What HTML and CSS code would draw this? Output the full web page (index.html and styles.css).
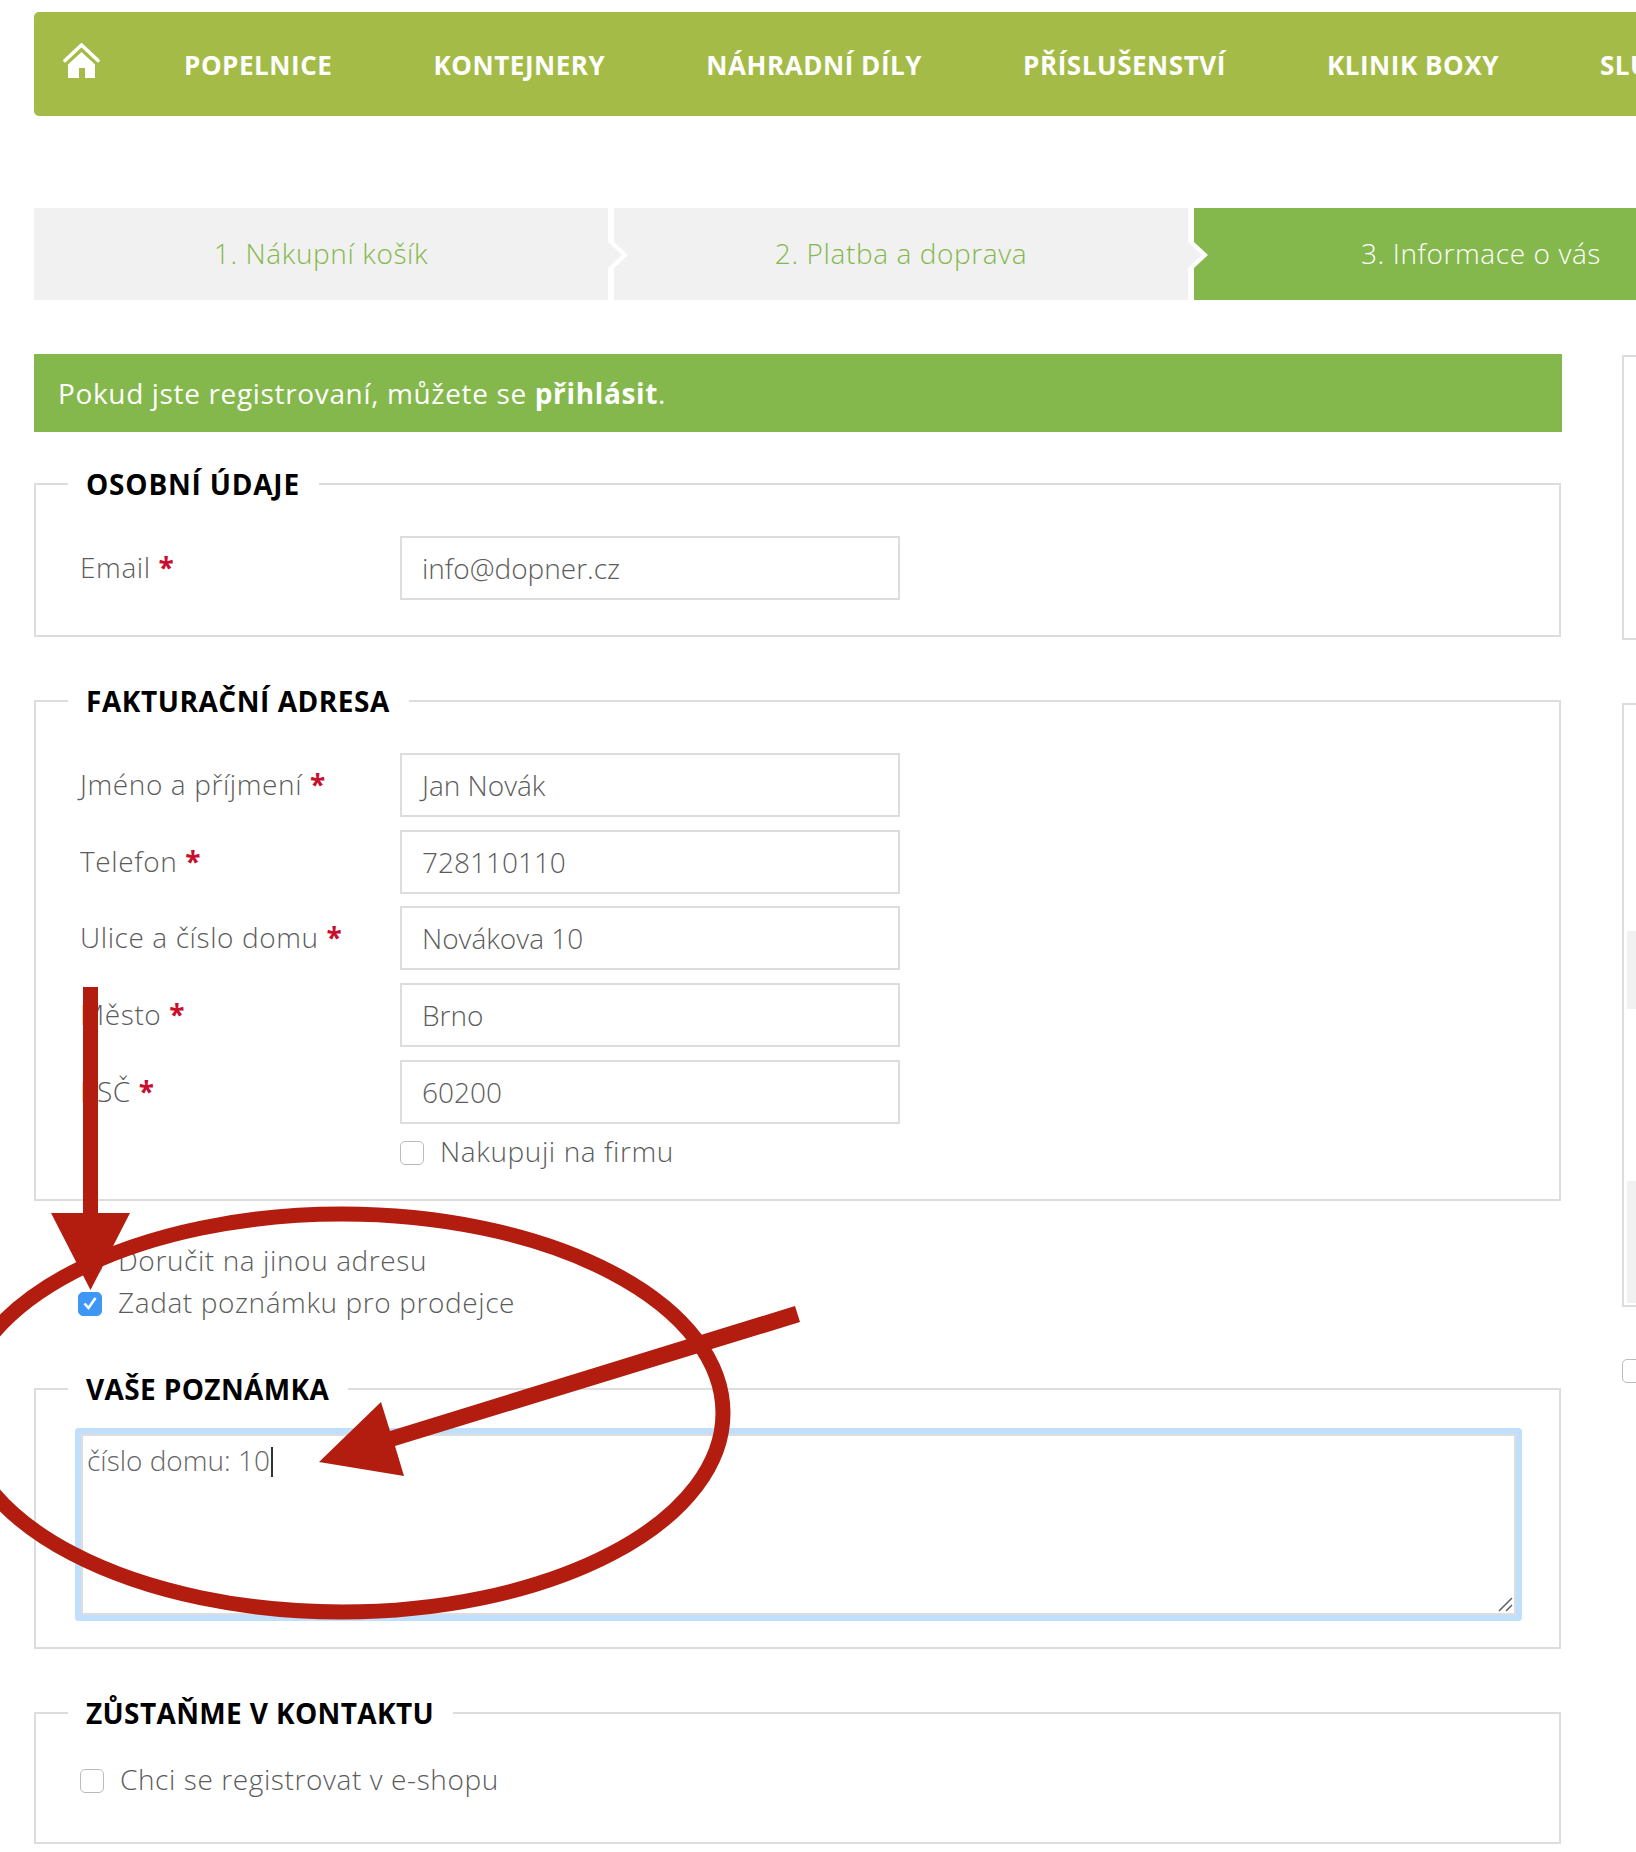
FILE: index.html
```html
<!DOCTYPE html>
<html lang="cs">
<head>
<meta charset="utf-8">
<title>Informace o vás</title>
<link rel="stylesheet" href="styles.css">
</head>
<body>
<div class="page">
  <nav class="nav">
    <a class="home" href="#"><svg width="37" height="35" viewBox="0 0 37 35"><path d="M2 17.5 L18.5 2 L35 17.5" fill="none" stroke="#fff" stroke-width="3.6" stroke-linecap="round" stroke-linejoin="round"/><path d="M18.5 9 L32 21.5 V35 H22 V25 H16 V35 H5 V21.5 Z" fill="#fff"/></svg></a>
    <a href="#">Popelnice</a>
    <a href="#">Kontejnery</a>
    <a href="#">Náhradní díly</a>
    <a href="#">Příslušenství</a>
    <a href="#">Klinik boxy</a>
    <a href="#">Služby</a>
  </nav>
  <ol class="steps">
    <li class="step">1. Nákupní košík</li>
    <li class="step">2. Platba a doprava</li>
    <li class="step active">3. Informace o vás</li>
  </ol>
  <div class="content">
    <main class="main">
      <div class="alert"><span>Pokud jste registrovaní, můžete se <strong>přihlásit</strong>.</span></div>
      <fieldset class="box personal">
        <legend>Osobní údaje</legend>
        <div class="row"><label>Email <b>*</b></label><div class="input">info@dopner.cz</div></div>
      </fieldset>
      <fieldset class="box billing">
        <legend>Fakturační adresa</legend>
        <div class="row"><label>Jméno a příjmení <b>*</b></label><div class="input">Jan Novák</div></div>
        <div class="row"><label>Telefon <b>*</b></label><div class="input">728110110</div></div>
        <div class="row"><label>Ulice a číslo domu <b>*</b></label><div class="input">Novákova 10</div></div>
        <div class="row"><label>Město <b>*</b></label><div class="input">Brno</div></div>
        <div class="row"><label>PSČ <b>*</b></label><div class="input">60200</div></div>
        <div class="check company"><span class="cb"></span>Nakupuji na firmu</div>
      </fieldset>
      <div class="options">
        <div class="check"><span class="cb"></span>Doručit na jinou adresu</div>
        <div class="check"><span class="cb on"><svg width="24" height="24" viewBox="0 0 24 24"><path d="M6.5 12.5 L10.5 17 L17.5 7" fill="none" stroke="#fff" stroke-width="2.6"/></svg></span>Zadat poznámku pro prodejce</div>
      </div>
      <fieldset class="box note">
        <legend>Vaše poznámka</legend>
        <div class="textarea">číslo domu: 10<i class="caret"></i>
          <svg class="grip" width="16" height="16" viewBox="0 0 16 16"><path d="M2 15 L15 2 M9 15 L15 9" stroke="#666" stroke-width="1.6"/></svg>
        </div>
      </fieldset>
      <fieldset class="box contact">
        <legend>Zůstaňme v kontaktu</legend>
        <div class="check"><span class="cb"></span>Chci se registrovat v e-shopu</div>
      </fieldset>
    </main>
    <aside class="side">
      <div class="side-box first"></div>
      <div class="side-box second"><div class="grey a"></div><div class="grey b"></div></div>
      <span class="cb side-cb"></span>
    </aside>
  </div>
  <svg class="marks" width="1636" height="1852" viewBox="0 0 1636 1852">
    <g fill="#b21d10">
      <path d="M83 987 H98 V1213 H130 L90.5 1290 L51 1213 H83 Z"/>
      <path d="M319 1462 L381 1402 L390 1431 L795 1306 L800 1322 L395 1446 L404 1476 Z"/>
    </g>
    <ellipse cx="342" cy="1413" rx="381" ry="199" fill="none" stroke="#b21d10" stroke-width="15"/>
  </svg>
</div>
</body>
</html>
```
FILE: styles.css
```css
* { box-sizing: border-box; }
html, body { margin: 0; padding: 0; background: #fff; }
body { font-family: "Open Sans", "Noto Sans", sans-serif; font-weight: 300; font-size: 28px; color: #5c5c5c; letter-spacing: .6px; }
.page { position: relative; width: 1636px; height: 1852px; overflow: hidden; padding: 12px 0 0 34px; }
.nav { display: flex; align-items: center; width: 1800px; height: 104px; background: #a4bc47; border-radius: 5px; padding-left: 29px; gap: 101px; }
.nav a { color: #fff; text-decoration: none; font-weight: 700; font-size: 26px; letter-spacing: .55px; text-transform: uppercase; white-space: nowrap; padding-top: 2px; }
.nav .home { display: flex; padding-top: 0; margin-top: -7px; margin-right: -17px; }
.steps { list-style: none; margin: 92px 0 0; padding: 0; display: flex; gap: 6px; width: 1760px; }
.step { position: relative; flex: 0 0 574px; height: 92px; padding-bottom: 2px; display: flex; align-items: center; justify-content: center; background: #f1f1f1; color: #84b84c; }
.step.active { background: #84b84c; color: #fff; }
.step:not(.active)::after { content: ""; position: absolute; z-index: 1; left: 100%; top: 34px; width: 20px; height: 26px; background: #fff; clip-path: polygon(0 0, 6px 0, 20px 13px, 6px 26px, 0 26px); }
.step:not(.active)::before { content: ""; position: absolute; z-index: 2; left: 100%; top: 34px; width: 14px; height: 26px; background: #f1f1f1; clip-path: polygon(0 0, 14px 13px, 0 26px); }
.content { display: flex; margin-top: 54px; }
.main { flex: 0 0 1528px; }
.alert { height: 78px; padding-bottom: 1px; background: #84b84c; color: #fff; display: flex; align-items: center; padding-left: 24px; font-weight: 400; letter-spacing: .65px; }
.alert strong { font-weight: 700; }
.box { margin: 0; border: 2px solid #ddd; padding: 0 0 0 44px; min-width: 0; width: 1527px; }
.box legend { margin-left: -12px; padding: 0 19px 0 18px; font-weight: 700; color: #000; text-transform: uppercase; font-size: 28px; line-height: 36px; letter-spacing: .55px; }
.personal legend { letter-spacing: .8px; }
.note legend, .contact legend { letter-spacing: .37px; }
.personal { margin-top: 34px; height: 171px; padding-top: 34px; }
.billing { margin-top: 46px; height: 518px; padding-top: 34px; }
.note { height: 278px; padding-top: 26px; }
.contact { margin-top: 46px; height: 149px; padding-top: 30px; }
.row { display: flex; height: 64px; margin-bottom: 12.7px; }
.row label { flex: 0 0 320px; padding-top: 13px; line-height: 36px; }
.row label b { color: #c8102e; font-weight: 700; }
.input { width: 500px; height: 64px; border: 2px solid #ddd; padding: 0 20px; display: flex; align-items: center; letter-spacing: 0; }
.check { display: flex; align-items: center; height: 36px; white-space: nowrap; }
.cb { flex: 0 0 24px; width: 24px; height: 24px; border: 1.5px solid #bbb; border-radius: 5px; background: #fff; margin-right: 16px; display: block; }
.check .cb { margin-top: 3px; }
.cb.on { background: #3f97f5; border-color: #3f97f5; }
.cb.on svg { display: block; margin: -1.5px; }
.company { margin: -3px 0 0 320px; }
.options { margin: 41px 0 51px 44px; display: flex; flex-direction: column; gap: 6px; }
.textarea { position: relative; width: 1435px; height: 181px; margin: 1px 0 0 1px; border: 2px solid #ddd; box-shadow: 0 0 0 6px #bfdffc; border-radius: 1px; padding: 6px 4px; line-height: 36px; color: #666; letter-spacing: 0; }
.caret { display: inline-block; width: 2px; height: 30px; background: #333; vertical-align: -6px; margin-left: 1px; }
.grip { position: absolute; right: 1px; bottom: 1px; }
.side { position: relative; flex: 0 0 200px; margin-left: 60px; }
.side-box { width: 200px; border: 2px solid #ddd; }
.side-box.first { height: 285px; margin-top: 1px; }
.side-box.second { height: 604px; margin-top: 63px; position: relative; padding: 0 0 0 2px; }
.grey { background: #f1f1f1; margin-left: 1px; }
.grey.a { height: 78px; margin-top: 226px; }
.grey.b { height: 122px; margin-top: 172px; }
.side-cb { margin-top: 52px; }
.marks { position: absolute; left: 0; top: 0; pointer-events: none; }
```
